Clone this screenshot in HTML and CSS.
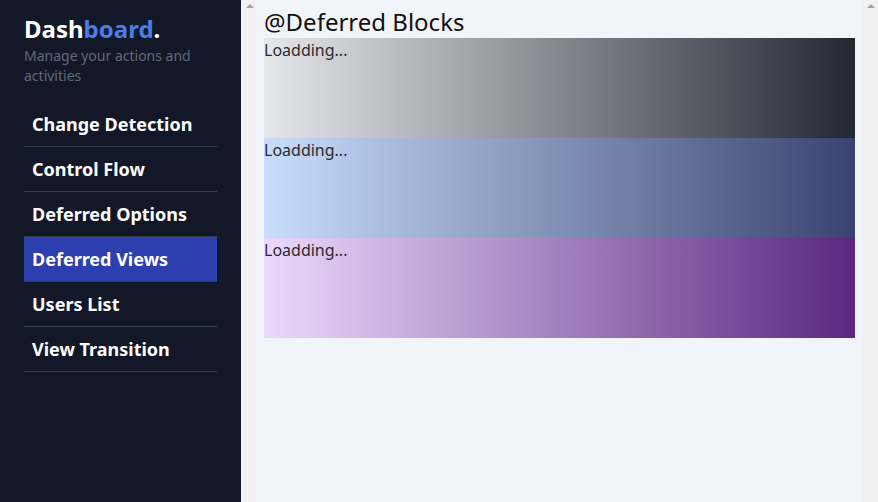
FILE: index.html
```html
<!DOCTYPE html>
<html lang="en">
<head>
<meta charset="utf-8">
<title>Dashboard</title>
<link rel="stylesheet" href="styles.css">
</head>
<body>
<div class="app">
  <aside class="sidebar">
    <h1 class="brand">Dash<span class="brand-accent">board</span>.</h1>
    <p class="tagline">Manage your actions and activities</p>
    <nav class="nav">
      <a class="nav-item">Change Detection</a>
      <a class="nav-item">Control Flow</a>
      <a class="nav-item">Deferred Options</a>
      <a class="nav-item active">Deferred Views</a>
      <a class="nav-item">Users List</a>
      <a class="nav-item">View Transition</a>
    </nav>
  </aside>
  <div class="main-wrap">
    <div class="scrollbar narrow"><span class="arrow"></span></div>
    <main class="content">
      <h2 class="title">@Deferred Blocks</h2>
      <div class="block block-gray">Loadding...</div>
      <div class="block block-blue">Loadding...</div>
      <div class="block block-purple">Loadding...</div>
    </main>
    <div class="scrollbar"><span class="arrow"></span></div>
  </div>
</div>
</body>
</html>
```
FILE: styles.css
```css
* { box-sizing: border-box; }
html, body { margin: 0; padding: 0; height: 100%; }
body {
  font-family: "Noto Sans", "Open Sans", sans-serif;
  overflow: hidden;
}
.app {
  display: flex;
  height: 100vh;
}
.sidebar {
  width: 241px;
  flex: 0 0 241px;
  background: #121828;
  padding: 13px 24px 0;
}
.brand {
  margin: 0;
  font-size: 24px;
  line-height: 32px;
  font-weight: 700;
  color: #ffffff;
}
.brand-accent { color: #4a7de8; }
.tagline {
  margin: 1px 0 0;
  font-size: 14px;
  line-height: 20px;
  color: #616a7d;
}
.nav {
  margin-top: 16px;
  display: flex;
  flex-direction: column;
}
.nav-item {
  display: block;
  height: 45px;
  padding: 8px 8px;
  font-size: 18px;
  line-height: 28px;
  font-weight: 700;
  color: #ffffff;
  border-bottom: 1px solid #343c4c;
  text-decoration: none;
}
.nav-item.active {
  background: #2d3faf;
}
.main-wrap {
  flex: 1;
  display: flex;
  background: #f1f4f9;
  padding-left: 2px;
}
.scrollbar {
  width: 15px;
  flex: 0 0 15px;
  background: #f1f1f1;
  display: flex;
  justify-content: center;
}
.scrollbar.narrow {
  width: 13px;
  flex: 0 0 13px;
}
.arrow {
  width: 0;
  height: 0;
  margin-top: 4px;
  border-left: 4px solid transparent;
  border-right: 4px solid transparent;
  border-bottom: 4px solid #a3a3a3;
}
.content {
  flex: 1;
  padding: 6px 8px 0;
}
.title {
  margin: 0;
  font-size: 24px;
  line-height: 32px;
  font-weight: 400;
  color: #111111;
}
.block {
  height: 100px;
  font-size: 16px;
  line-height: 24px;
  color: #2a2a2f;
}
.block-gray { background: linear-gradient(to right, #e5e7eb, #242833); }
.block-blue { background: linear-gradient(to right, #c8ddfc, #3a4370); }
.block-purple { background: linear-gradient(to right, #ebd9fd, #5a2880); }
```
